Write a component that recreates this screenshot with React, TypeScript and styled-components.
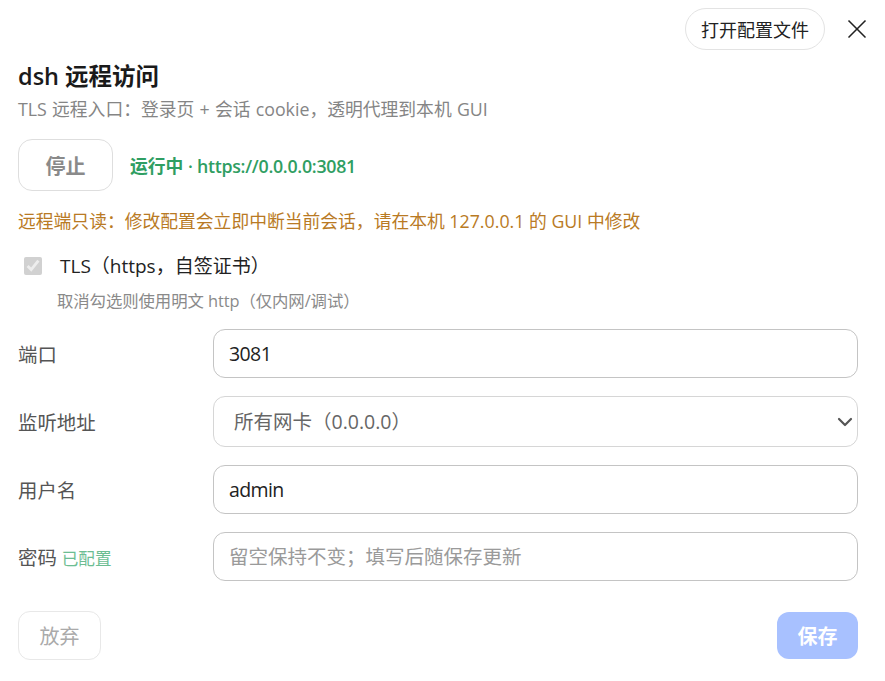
import React from 'react';
import styled, { createGlobalStyle } from 'styled-components';
import { ChevronDown, X } from 'lucide-react';

const GlobalStyle = createGlobalStyle`
  html, body {
    margin: 0;
    background: #fff;
    overflow: hidden;
  }
  body, input, select, button {
    font-family: "Open Sans", "Noto Sans CJK SC", sans-serif;
  }
`;

const Page = styled.div`
  width: 885px;
  height: 681px;
  box-sizing: border-box;
  padding: 8px 27px 0 18px;
`;

const TopBar = styled.div`
  display: flex;
  justify-content: flex-end;
  align-items: center;
  gap: 16px;
  margin-right: -15px;
`;

const PillButton = styled.button`
  width: 140px;
  height: 42px;
  padding: 0;
  border: 1px solid #e3e3e3;
  border-radius: 21px;
  background: #fff;
  color: #222;
  font-size: 18px;
`;

const CloseButton = styled.button`
  display: flex;
  padding: 0;
  border: 0;
  background: none;
  color: #222;
`;

const Title = styled.h1`
  margin: 10px 0 0;
  font-size: 23.5px;
  line-height: 32px;
  font-weight: 600;
  color: #1a1a1a;
`;

const Subtitle = styled.p`
  margin: 5px 0 0;
  font-size: 17.8px;
  line-height: 24px;
  word-spacing: 0.6px;
  color: #858585;
`;

const StatusRow = styled.div`
  display: flex;
  align-items: center;
  gap: 17px;
  margin-top: 18px;
`;

const StopButton = styled.button`
  width: 95px;
  height: 52px;
  padding: 0;
  border: 1px solid #dedede;
  border-radius: 14px;
  background: #fff;
  color: #8a8a8a;
  font-size: 20px;
  font-weight: 700;
`;

const StatusText = styled.span`
  font-size: 17.8px;
  font-weight: 600;
  color: #2f9e62;
`;

const StatusUrl = styled.span`
  letter-spacing: -0.28px;
`;

const Warning = styled.p`
  margin: 18px 0 0;
  font-size: 17.8px;
  line-height: 24px;
  color: #b97a24;
`;

const CheckRow = styled.label`
  display: flex;
  align-items: center;
  gap: 18px;
  margin: 20px 0 0 6px;
  font-size: 19px;
  line-height: 26px;
  color: #222;
`;

const Check = styled.input`
  width: 18px;
  height: 18px;
  margin: 0;
`;

const Hint = styled.p`
  margin: 11px 0 0 39px;
  font-size: 16.4px;
  line-height: 22px;
  letter-spacing: -0.08px;
  color: #8a8a8a;
`;

const Form = styled.div`
  display: grid;
  grid-template-columns: 195px 1fr;
  row-gap: 18px;
  align-items: center;
  margin-top: 17px;
`;

const Label = styled.label`
  font-size: 19.4px;
  color: #555;
`;

const Tag = styled.span`
  margin-left: 5px;
  font-size: 16.6px;
  color: #6cbd92;
`;

const TextInput = styled.input<{ $latin?: boolean }>`
  box-sizing: border-box;
  width: 100%;
  height: 49px;
  padding: 0 15px;
  border: 1px solid #c4c4c4;
  border-radius: 12px;
  background: #fff;
  color: #222;
  font-size: 19.5px;
  letter-spacing: ${(p) => (p.$latin ? '-0.6px' : '0')};
  outline: none;

  &::placeholder {
    color: #9a9a9a;
    opacity: 1;
  }
`;

const SelectWrap = styled.div`
  position: relative;
  display: flex;
`;

const Select = styled.select`
  box-sizing: border-box;
  width: 100%;
  height: 51px;
  padding: 0 20px;
  border: 1px solid #d6d6d6;
  border-radius: 12px;
  background: #fff;
  color: #666;
  font-size: 19.5px;
  outline: none;
  appearance: none;
`;

const SelectArrow = styled(ChevronDown)`
  position: absolute;
  top: 13.5px;
  right: 1px;
  color: #555;
  pointer-events: none;
`;

const Footer = styled.div`
  display: flex;
  justify-content: space-between;
  align-items: center;
  margin-top: 30px;
`;

const DiscardButton = styled.button`
  width: 83px;
  height: 49px;
  padding: 0;
  border: 1px solid #e8e8e8;
  border-radius: 12px;
  background: #fff;
  color: #aaa;
  font-size: 20px;
`;

const SaveButton = styled.button`
  width: 81px;
  height: 47px;
  padding: 0;
  border: 0;
  border-radius: 12px;
  background: #a8c1ff;
  color: #fff;
  font-size: 20px;
  font-weight: 700;
`;

const App: React.FC = () => {
  return (
    <>
      <GlobalStyle />
      <Page>
        <TopBar>
          <PillButton>打开配置文件</PillButton>
          <CloseButton aria-label="关闭">
            <X size={32} strokeWidth={1.25} />
          </CloseButton>
        </TopBar>
        <Title>dsh 远程访问</Title>
        <Subtitle>TLS 远程入口：登录页 + 会话 cookie，透明代理到本机 GUI</Subtitle>
        <StatusRow>
          <StopButton>停止</StopButton>
          <StatusText>
            运行中 <StatusUrl>· https://0.0.0.0:3081</StatusUrl>
          </StatusText>
        </StatusRow>
        <Warning>远程端只读：修改配置会立即中断当前会话，请在本机 127.0.0.1 的 GUI 中修改</Warning>
        <CheckRow>
          <Check type="checkbox" checked disabled readOnly />
          TLS（https，自签证书）
        </CheckRow>
        <Hint>取消勾选则使用明文 http（仅内网/调试）</Hint>
        <Form>
          <Label>端口</Label>
          <TextInput $latin defaultValue="3081" />
          <Label>监听地址</Label>
          <SelectWrap>
            <Select defaultValue="all">
              <option value="all">所有网卡（0.0.0.0）</option>
            </Select>
            <SelectArrow size={24} strokeWidth={2.2} />
          </SelectWrap>
          <Label>用户名</Label>
          <TextInput $latin defaultValue="admin" />
          <Label>
            密码<Tag>已配置</Tag>
          </Label>
          <TextInput placeholder="留空保持不变；填写后随保存更新" />
        </Form>
        <Footer>
          <DiscardButton>放弃</DiscardButton>
          <SaveButton>保存</SaveButton>
        </Footer>
      </Page>
    </>
  );
};

export default App;
